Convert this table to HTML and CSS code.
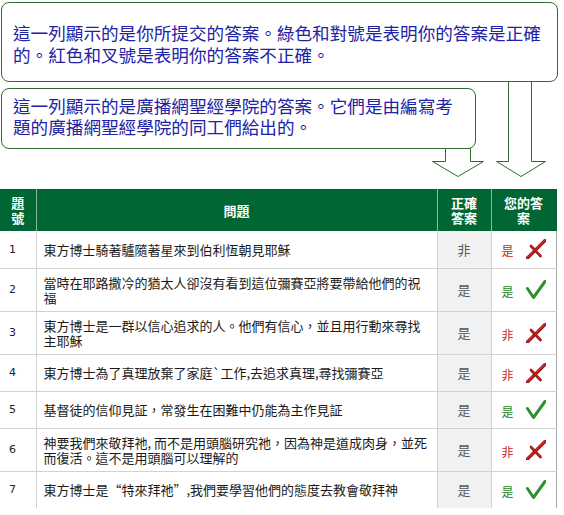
FILE: index.html
```html
<!DOCTYPE html>
<html lang="zh-Hant">
<head>
<meta charset="utf-8">
<link rel="stylesheet" href="styles.css">
</head>
<body>
<div class="page">
  <div class="notes">
    <div class="callout c1">這一列顯示的是你所提交的答案。綠色和對號是表明你的答案是正確的。紅色和叉號是表明你的答案不正確。</div>
    <div class="callout c2">這一列顯示的是廣播網聖經學院的答案。它們是由編寫考題的廣播網聖經學院的同工們給出的。</div>
    <svg class="arrows" width="564" height="189" viewBox="0 0 564 189">
      <polygon points="445.5,148.5 470.5,148.5 470.5,161.5 483.5,161.5 458,176.5 432.5,161.5 445.5,161.5" fill="#fff" stroke="#2f6b2f" stroke-width="1"/>
      <polygon points="508.5,81.5 531.5,81.5 531.5,161.5 545.5,161.5 521,176.5 496.5,161.5 508.5,161.5" fill="#fff" stroke="#2f6b2f" stroke-width="1"/>
    </svg>
  </div>
  <table class="quiz">
    <colgroup>
      <col class="w-num"><col class="w-q"><col class="w-ok"><col class="w-you">
    </colgroup>
    <thead>
      <tr><th>題號</th><th>問題</th><th>正確答案</th><th>您的答案</th></tr>
    </thead>
    <tbody>
      <tr><td class="num">1</td><td class="q">東方博士騎著驢隨著星來到伯利恆朝見耶穌</td><td class="ok">非</td><td class="you"><span class="ans wrong">是</span><svg class="icon" width="20" height="20" viewBox="0 0 20 20"><path d="M1.5 19 L19.5 1" stroke="#7d1010" stroke-width="3.2" stroke-linecap="round"/><path d="M1.5 18.5 L19 1" stroke="#d42222" stroke-width="2" stroke-linecap="round"/><path d="M5 7 L14.5 17" stroke="#7d1010" stroke-width="2.6" stroke-linecap="round"/><path d="M5 6.5 L14.5 16.5" stroke="#d42222" stroke-width="1.5" stroke-linecap="round"/></svg></td></tr>
      <tr><td class="num">2</td><td class="q">當時在耶路撒冷的猶太人卻沒有看到這位彌賽亞將要帶給他們的祝福</td><td class="ok">是</td><td class="you"><span class="ans right">是</span><svg class="icon" width="20" height="20" viewBox="0 0 20 20"><path d="M1.5 8.5 L7.5 17.5 L19 1.5" fill="none" stroke="#2e8f2e" stroke-width="3" stroke-linecap="round" stroke-linejoin="round"/></svg></td></tr>
      <tr><td class="num">3</td><td class="q">東方博士是一群以信心追求的人。他們有信心，並且用行動來尋找主耶穌</td><td class="ok">是</td><td class="you"><span class="ans wrong">非</span><svg class="icon" width="20" height="20" viewBox="0 0 20 20"><path d="M1.5 19 L19.5 1" stroke="#7d1010" stroke-width="3.2" stroke-linecap="round"/><path d="M1.5 18.5 L19 1" stroke="#d42222" stroke-width="2" stroke-linecap="round"/><path d="M5 7 L14.5 17" stroke="#7d1010" stroke-width="2.6" stroke-linecap="round"/><path d="M5 6.5 L14.5 16.5" stroke="#d42222" stroke-width="1.5" stroke-linecap="round"/></svg></td></tr>
      <tr><td class="num">4</td><td class="q">東方博士為了真理放棄了家庭`工作,去追求真理,尋找彌賽亞</td><td class="ok">是</td><td class="you"><span class="ans wrong">非</span><svg class="icon" width="20" height="20" viewBox="0 0 20 20"><path d="M1.5 19 L19.5 1" stroke="#7d1010" stroke-width="3.2" stroke-linecap="round"/><path d="M1.5 18.5 L19 1" stroke="#d42222" stroke-width="2" stroke-linecap="round"/><path d="M5 7 L14.5 17" stroke="#7d1010" stroke-width="2.6" stroke-linecap="round"/><path d="M5 6.5 L14.5 16.5" stroke="#d42222" stroke-width="1.5" stroke-linecap="round"/></svg></td></tr>
      <tr><td class="num">5</td><td class="q">基督徒的信仰見証，常發生在困難中仍能為主作見証</td><td class="ok">是</td><td class="you"><span class="ans right">是</span><svg class="icon" width="20" height="20" viewBox="0 0 20 20"><path d="M1.5 8.5 L7.5 17.5 L19 1.5" fill="none" stroke="#2e8f2e" stroke-width="3" stroke-linecap="round" stroke-linejoin="round"/></svg></td></tr>
      <tr><td class="num">6</td><td class="q">神要我們來敬拜祂, 而不是用頭腦研究祂，因為神是道成肉身，並死而復活。這不是用頭腦可以理解的</td><td class="ok">是</td><td class="you"><span class="ans wrong">非</span><svg class="icon" width="20" height="20" viewBox="0 0 20 20"><path d="M1.5 19 L19.5 1" stroke="#7d1010" stroke-width="3.2" stroke-linecap="round"/><path d="M1.5 18.5 L19 1" stroke="#d42222" stroke-width="2" stroke-linecap="round"/><path d="M5 7 L14.5 17" stroke="#7d1010" stroke-width="2.6" stroke-linecap="round"/><path d="M5 6.5 L14.5 16.5" stroke="#d42222" stroke-width="1.5" stroke-linecap="round"/></svg></td></tr>
      <tr class="last"><td class="num">7</td><td class="q">東方博士是“特來拜祂”,我們要學習他們的態度去教會敬拜神</td><td class="ok">是</td><td class="you"><span class="ans right">是</span><svg class="icon" width="20" height="20" viewBox="0 0 20 20"><path d="M1.5 8.5 L7.5 17.5 L19 1.5" fill="none" stroke="#2e8f2e" stroke-width="3" stroke-linecap="round" stroke-linejoin="round"/></svg></td></tr>
    </tbody>
  </table>
</div>
</body>
</html>
```

FILE: styles.css
```css
html, body {
  margin: 0;
  padding: 0;
  background: #fff;
}
body {
  font-family: "Noto Sans CJK TC", "Noto Sans", sans-serif;
}
.page {
  width: 564px;
}
.notes {
  position: relative;
  height: 189px;
  box-sizing: border-box;
  padding: 2px 0 0 1px;
}
.callout {
  box-sizing: border-box;
  border: 1px solid #2f6b2f;
  border-radius: 8px;
  background: #fff;
  color: #2222a4;
  font-size: 17.6px;
  line-height: 22px;
  position: relative;
  z-index: 1;
}
.c1 {
  width: 557px;
  height: 80px;
  padding: 4px 10px 0 11px;
  display: flex;
  align-items: center;
}
.c2 {
  width: 475px;
  height: 61px;
  margin-top: 6px;
  padding: 6px 10px 0 11px;
  line-height: 21px;
}
.arrows {
  position: absolute;
  left: 0;
  top: 0;
  z-index: 0;
}
.quiz {
  border-collapse: collapse;
  table-layout: fixed;
  width: 556px;
}
.w-num { width: 36px; }
.w-q { width: 401px; }
.w-ok { width: 54px; }
.w-you { width: 65px; }
.quiz th {
  background: #006633;
  color: #fff;
  font-size: 13px;
  font-weight: 700;
  line-height: 15px;
  padding: 6px 8px;
  height: 42px;
  box-sizing: border-box;
  text-align: center;
  border-right: 1px solid #8db8a0;
}
.quiz th:last-child {
  border-right: 1px solid #006633;
}
.quiz td {
  font-size: 13px;
  line-height: 15px;
  padding: 6px 7px;
  vertical-align: middle;
  color: #1a1a1a;
  border-bottom: 1px solid #d2d2d2;
  border-right: 1px solid #d2d2d2;
}
.quiz tbody tr {
  height: 37px;
}
.quiz tr.last td {
  border-bottom: none;
}
.quiz td:last-child {
  border-right: 1px solid #a8a8a8;
}
.quiz td.num {
  font-family: "DejaVu Sans", sans-serif;
  font-size: 11px;
  padding-left: 9px;
  color: #222;
}
.quiz td.ok {
  background: #f1f1f1;
  text-align: center;
  color: #555;
}
.quiz td.you {
  text-align: center;
  padding: 6px 4px;
  white-space: nowrap;
}
.ans {
  font-size: 12px;
}
.ans.wrong { color: #cc1a1a; }
.ans.right { color: #2a7f2a; }
.icon {
  margin-left: 12px;
  vertical-align: -3px;
}
```
